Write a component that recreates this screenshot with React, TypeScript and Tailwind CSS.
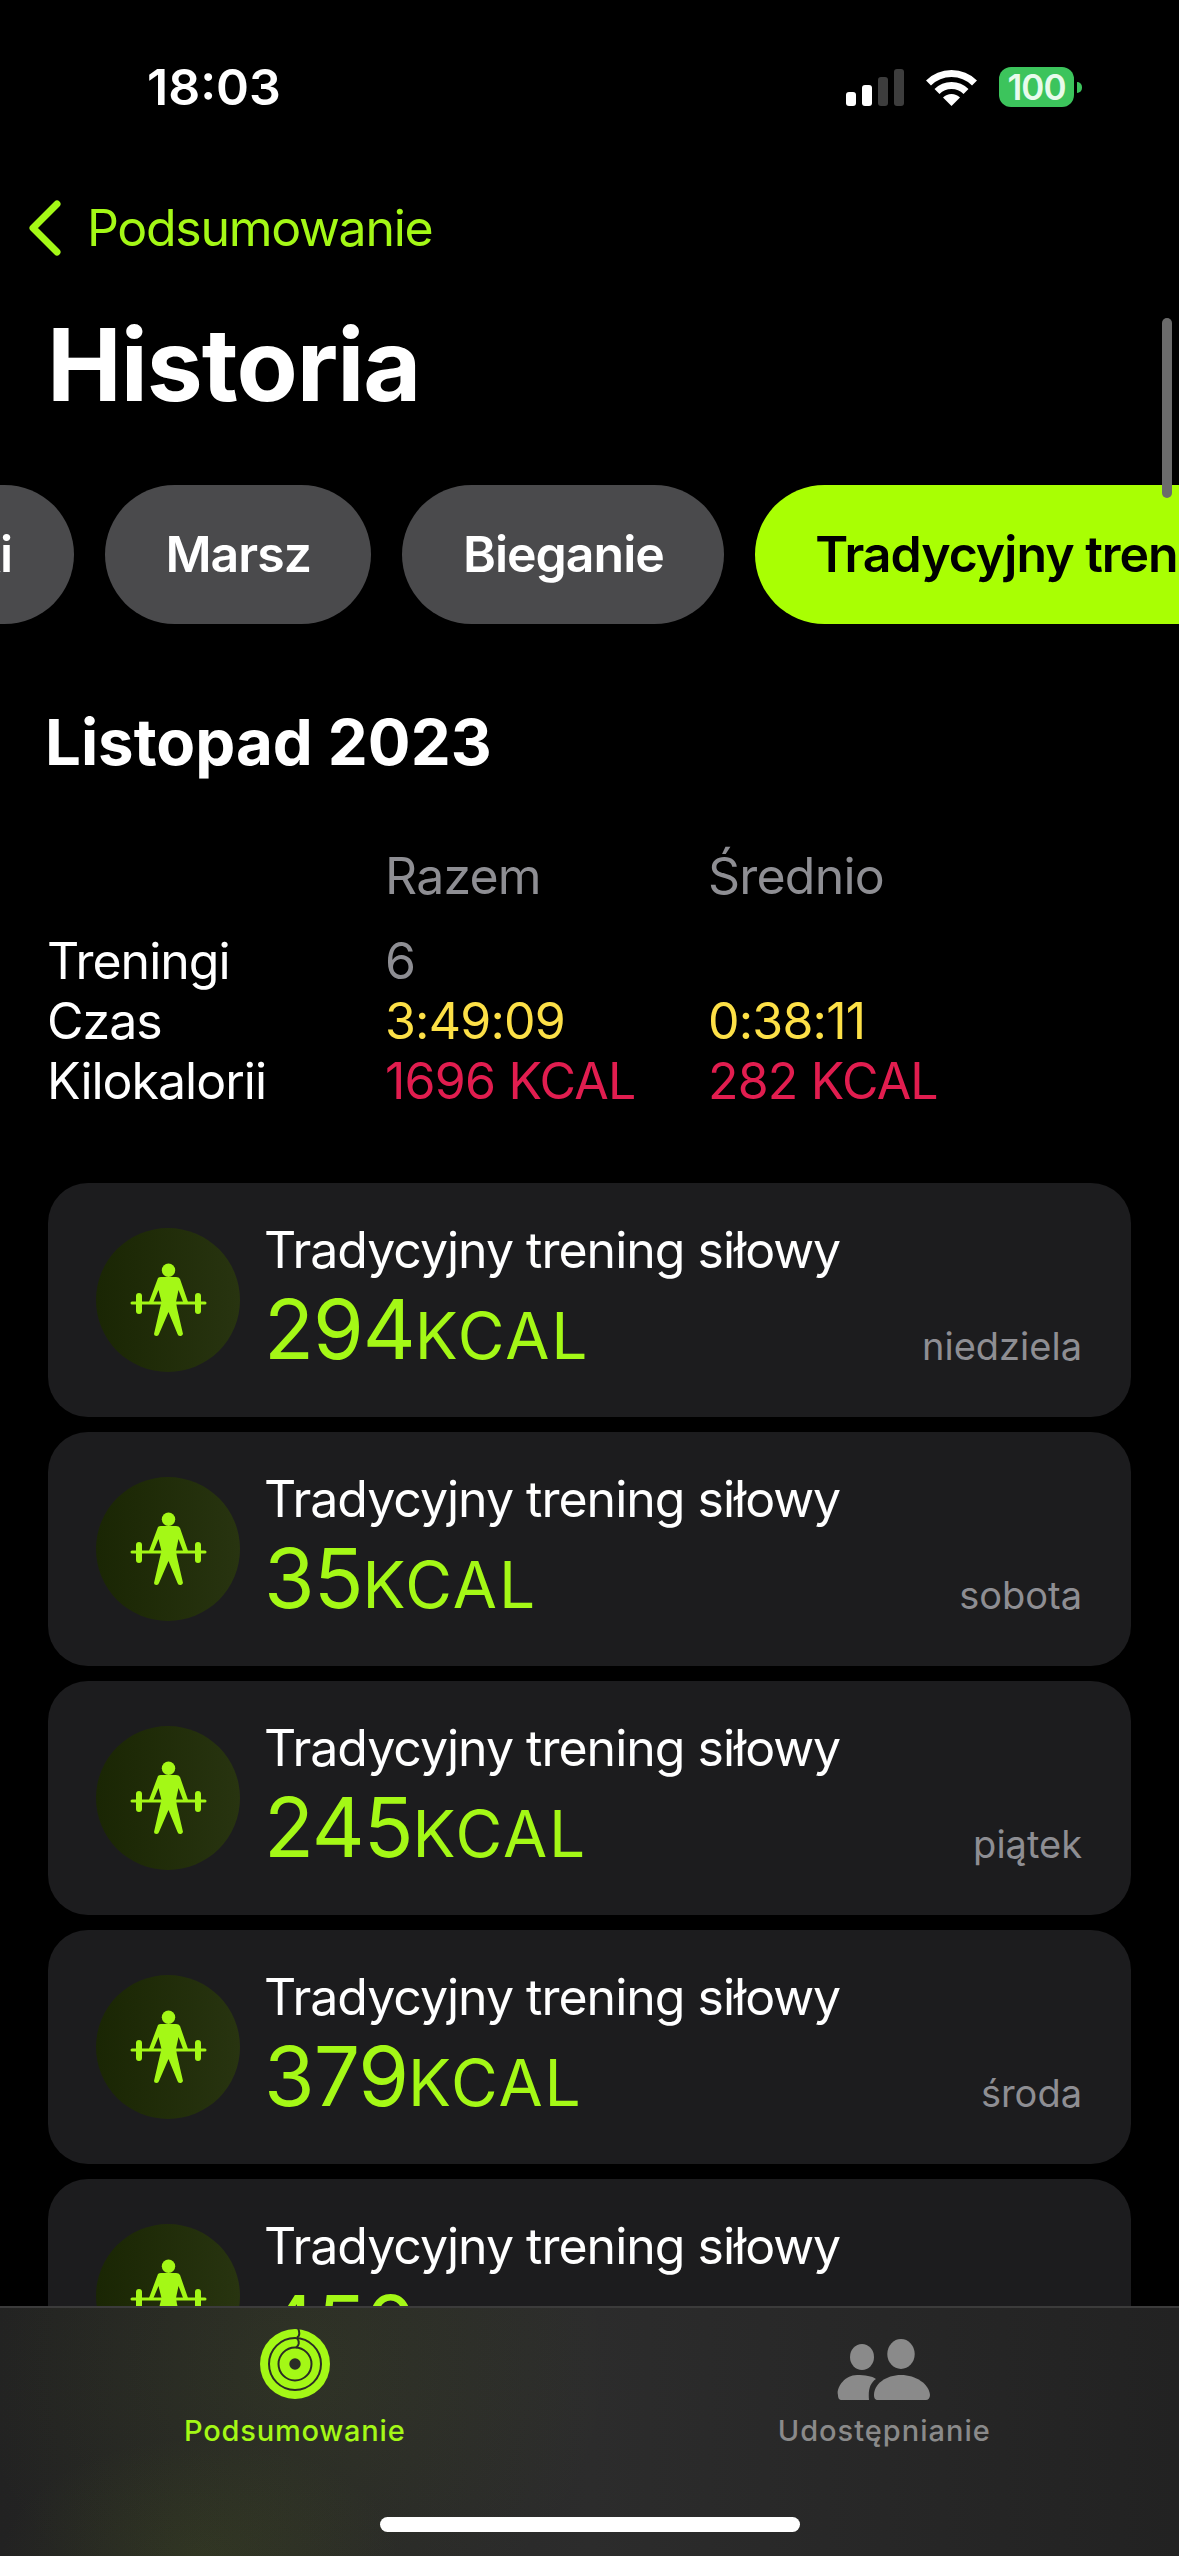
const categories = [
  { label: "Wędrówki", active: false, cut: true },
  { label: "Marsz", active: false, cut: false },
  { label: "Bieganie", active: false, cut: false },
  { label: "Tradycyjny trening siłowy", active: true, cut: false },
];

const workouts = [
  { kcal: 294, day: "niedziela" },
  { kcal: 35, day: "sobota" },
  { kcal: 245, day: "piątek" },
  { kcal: 379, day: "środa" },
  { kcal: 450, day: "wtorek" },
];

function StatusIcons() {
  return (
    <div className="flex items-center">
      <div className="flex items-end gap-[6px] h-[37px]">
        <div className="w-[10px] h-[14px] rounded-[3px] bg-white" />
        <div className="w-[10px] h-[21px] rounded-[3px] bg-white" />
        <div className="w-[10px] h-[29px] rounded-[3px] bg-[#3d3d3d]" />
        <div className="w-[10px] h-[37px] rounded-[3px] bg-[#3d3d3d]" />
      </div>
      <svg className="ml-[22px]" width="51" height="37" viewBox="0 0 51 37" fill="none">
        <path d="M2.5 14A32.5 32.5 0 0 1 48.5 14" stroke="#fff" strokeWidth="7" />
        <path d="M11 22.5A20.5 20.5 0 0 1 40 22.5" stroke="#fff" strokeWidth="7" />
        <path d="M25.5 37L17 28.5A12 12 0 0 1 34 28.5Z" fill="#fff" />
      </svg>
      <div className="ml-[22px] flex items-center">
        <div className="w-[75px] h-[40px] rounded-[12px] bg-[#3cc45c] flex items-center justify-center text-[35px] leading-none font-semibold tracking-[-1px] text-[#e8fbec]">
          100
        </div>
        <div className="ml-[3px] w-[5px] h-[11px] rounded-r-full bg-[#3cc45c]" />
      </div>
    </div>
  );
}

function LifterIcon() {
  return (
    <svg width="144" height="144" viewBox="0 0 144 144" fill="none">
      <circle cx="72.5" cy="42.3" r="6.7" fill="#a4f816" />
      <path d="M36 75H109" stroke="#a4f816" strokeWidth="3" strokeLinecap="round" />
      <rect x="40" y="65" width="6" height="21" rx="3" fill="#a4f816" />
      <rect x="99" y="65" width="6" height="21" rx="3" fill="#a4f816" />
      <path
        d="M62 50Q63 49 65 49H80Q83 49 84 51L92 74L87.5 75L82.5 62L80 74L81 80L87 106Q86 108.5 84 108Q82 108 81.5 106L72.5 84L63 106Q62.5 108 60.5 108Q58 108 58 106L64 80L65.5 74L62.5 62L57 75L53 74Z"
        fill="#a4f816"
      />
    </svg>
  );
}

function WorkoutCard({ kcal, day }: { kcal: number; day: string }) {
  return (
    <div className="flex h-[234px] shrink-0 items-center rounded-[40px] bg-[#1c1c1e] pl-[48px] pr-[49px]">
      <div className="mt-[-1px] h-[144px] w-[144px] shrink-0 rounded-full bg-linear-to-r from-[#1a2604] to-[#283410]">
        <LifterIcon />
      </div>
      <div className="ml-[24px] self-start pt-[37px]">
        <p className="h-[60px] text-[50px] leading-[60px] tracking-[-1px] text-white whitespace-nowrap">
          Tradycyjny trening siłowy
        </p>
        <p className="mt-[10px] flex h-[80px] items-baseline leading-[80px] text-[#a4f816]">
          <span className="text-[82px] tracking-[-1px]">{kcal}</span>
          <span className="text-[64px] tracking-[2px]">KCAL</span>
        </p>
      </div>
      <span className="mb-[46px] ml-auto self-end text-[38px] leading-[50px] text-[#8e8e93]">{day}</span>
    </div>
  );
}

function RingsIcon() {
  return (
    <svg width="72" height="72" viewBox="-36 -36 72 72" fill="none">
      <circle r="35" fill="#a4f816" />
      <circle r="26" stroke="#2a2b26" strokeWidth="2" />
      <circle r="16.5" stroke="#2a2b26" strokeWidth="2" />
      <circle r="5.7" fill="#2a2b26" />
      <path d="M3 -36C5 -31 5 -28 2 -26.5" stroke="#2a2b26" strokeWidth="2" />
      <path d="M2 -26C5 -22 4 -18 1 -16.5" stroke="#2a2b26" strokeWidth="2" />
    </svg>
  );
}

function PeopleIcon() {
  return (
    <svg width="94" height="72" viewBox="0 0 94 72" fill="none">
      <ellipse cx="25" cy="29" rx="12" ry="13" fill="#8a8a8a" />
      <ellipse cx="64" cy="26" rx="13.7" ry="15" fill="#8a8a8a" />
      <path d="M1 67C-1 62 6 47 20 47C28 47 35 48 39 51C33 55 31 62 32 72H5C2 72 1 70 1 67Z" fill="#8a8a8a" />
      <path d="M37 67C37 56 49 47 64 47C79 47 92 56 93 67C93 70 91 72 89 72H41C38 72 37 70 37 67Z" fill="#8a8a8a" />
    </svg>
  );
}

function TabBar() {
  return (
    <div className="absolute bottom-0 left-0 right-0 h-[250px] border-t-2 border-[#3b3b3b] bg-[radial-gradient(ellipse_320px_280px_at_290px_60px,rgba(130,170,20,0.09),transparent),radial-gradient(ellipse_200px_120px_at_200px_250px,rgba(130,170,20,0.1),transparent),linear-gradient(to_right,#222222,#2c2c2c_50%,#222222)]">
      <div className="grid grid-cols-2 pt-[20px]">
        <div className="flex flex-col items-center text-[#a4f816]">
          <RingsIcon />
          <span className="mt-[11px] text-[29px] leading-[40px] font-medium tracking-[0.8px]">Podsumowanie</span>
        </div>
        <div className="flex flex-col items-center text-[#8a8a8a]">
          <PeopleIcon />
          <span className="mt-[11px] text-[29px] leading-[40px] font-medium tracking-[1px]">Udostępnianie</span>
        </div>
      </div>
      <div className="absolute bottom-[24px] left-[380px] h-[15px] w-[420px] rounded-full bg-white" />
    </div>
  );
}

export default function App() {
  return (
    <div className="relative h-[2556px] w-[1179px] overflow-hidden bg-black font-[Inter,sans-serif] text-white">
      <div className="flex h-[198px] items-start justify-between pl-[147px] pr-[97px] pt-[62px]">
        <span className="text-[50px] leading-[50px] font-semibold">18:03</span>
        <div className="mt-[5px]">
          <StatusIcons />
        </div>
      </div>

      <div className="flex h-[60px] items-center pl-[28px] text-[#a4f816]">
        <svg width="34" height="56" viewBox="0 0 34 56" fill="none">
          <path d="M29 4L5 28L29 52" stroke="#a4f816" strokeWidth="7" strokeLinecap="round" strokeLinejoin="round" />
        </svg>
        <span className="ml-[25px] text-[50px] leading-[60px] tracking-[-1.3px]">Podsumowanie</span>
      </div>

      <h1 className="mt-[47px] h-[120px] pl-[47px] text-[100px] leading-[120px] font-bold tracking-[-1px]">Historia</h1>

      <div className="mt-[60px] flex h-[139px] gap-[31px]">
        {categories.map((c) => (
          <div
            key={c.label}
            className={
              c.active
                ? "flex shrink-0 items-center rounded-full bg-[#a9ff03] px-[60px] text-[50px] font-semibold tracking-[-1px] whitespace-nowrap text-black"
                : c.cut
                  ? "ml-[-226px] flex w-[300px] shrink-0 items-center justify-end overflow-hidden rounded-full bg-[#4a4a4c] pr-[62px] text-[50px] font-semibold tracking-[-1px] whitespace-nowrap"
                  : "flex shrink-0 items-center rounded-full bg-[#4a4a4c] px-[60.5px] text-[50px] font-semibold tracking-[-1px] whitespace-nowrap"
            }
          >
            {c.label}
          </div>
        ))}
      </div>

      <h2 className="mt-[80px] h-[76px] pl-[45px] text-[63.5px] leading-[76px] font-bold">Listopad 2023</h2>

      <div className="mt-[66px] grid grid-cols-[338px_323px_1fr] pl-[47px] text-[50px] leading-[60px] tracking-[-0.8px] text-[#8e8e93]">
        <span />
        <span>Razem</span>
        <span>Średnio</span>
        <span className="mt-[25px] tracking-[-1px] text-white">Treningi</span>
        <span className="mt-[25px]">6</span>
        <span className="mt-[25px]" />
        <span className="tracking-[-1px] text-white">Czas</span>
        <span className="text-[#fde047]">3:49:09</span>
        <span className="text-[#fde047]">0:38:11</span>
        <span className="tracking-[-1px] text-white">Kilokalorii</span>
        <span className="text-[#e11d4f]">1696 KCAL</span>
        <span className="text-[#e11d4f]">282 KCAL</span>
      </div>

      <div className="mt-[72px] flex flex-col gap-[15px] pl-[48px] pr-[48px]">
        {workouts.map((w) => (
          <WorkoutCard key={w.kcal} kcal={w.kcal} day={w.day} />
        ))}
      </div>

      <div className="absolute right-[7px] top-[318px] h-[180px] w-[10px] rounded-full bg-[#6b6b6b]" />
      <TabBar />
    </div>
  );
}
